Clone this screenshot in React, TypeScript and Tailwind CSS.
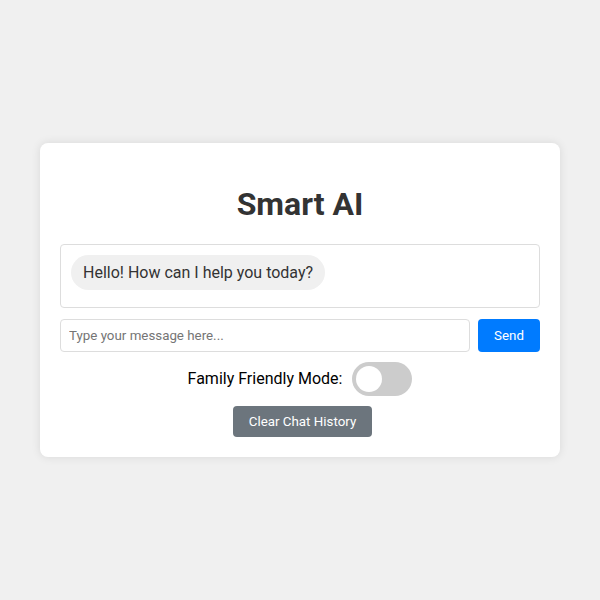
import { useState } from 'react'

export default function App() {
  const [message, setMessage] = useState('')
  const [familyMode, setFamilyMode] = useState(false)

  return (
    <div
      className="min-h-screen w-full bg-[#f0f0f0] flex items-center justify-center"
      style={{ fontFamily: 'Roboto, "Liberation Sans", sans-serif' }}
    >
      <div className="w-[520px] bg-white rounded-lg p-5 shadow-[0_0_10px_rgba(0,0,0,0.1)]">
        {/* Title */}
        <h1 className="text-[32px] leading-[37px] font-bold text-[#333] text-center mt-[23px] mb-[21px]">
          Smart AI
        </h1>

        {/* Chat box */}
        <div className="h-16 border border-[#ddd] rounded p-2.5 overflow-y-auto">
          <div className="inline-block bg-[#f0f0f0] rounded-[18px] px-3 py-[7px] text-base leading-[21px] text-[#333]">
            Hello! How can I help you today?
          </div>
        </div>

        {/* Input row */}
        <div className="flex gap-2 mt-[11px]">
          <input
            value={message}
            onChange={(e) => setMessage(e.target.value)}
            placeholder="Type your message here..."
            className="flex-1 h-[33px] border border-[#ddd] rounded px-2 text-[13.333px] text-[#333] placeholder:text-[#757575] outline-none"
          />
          <button className="w-[62px] h-[33px] bg-[#007bff] text-white text-[13.333px] rounded">Send</button>
        </div>

        {/* Family mode toggle */}
        <div className="flex items-center justify-center gap-2.5 mt-2.5">
          <span className="text-base text-black">Family Friendly Mode:</span>
          <button
            onClick={() => setFamilyMode(!familyMode)}
            className={`relative w-[60px] h-[34px] rounded-full ${familyMode ? 'bg-[#007bff]' : 'bg-[#ccc]'}`}
          >
            <span
              className={`absolute top-1 left-1 w-[26px] h-[26px] rounded-full bg-white transition-transform ${familyMode ? 'translate-x-[26px]' : ''}`}
            />
          </button>
        </div>

        {/* Clear */}
        <div className="flex justify-center mt-2.5 pl-[5px]">
          <button className="w-[139px] h-[31px] bg-[#6c757d] text-white text-[13.333px] rounded">
            Clear Chat History
          </button>
        </div>
      </div>
    </div>
  )
}
